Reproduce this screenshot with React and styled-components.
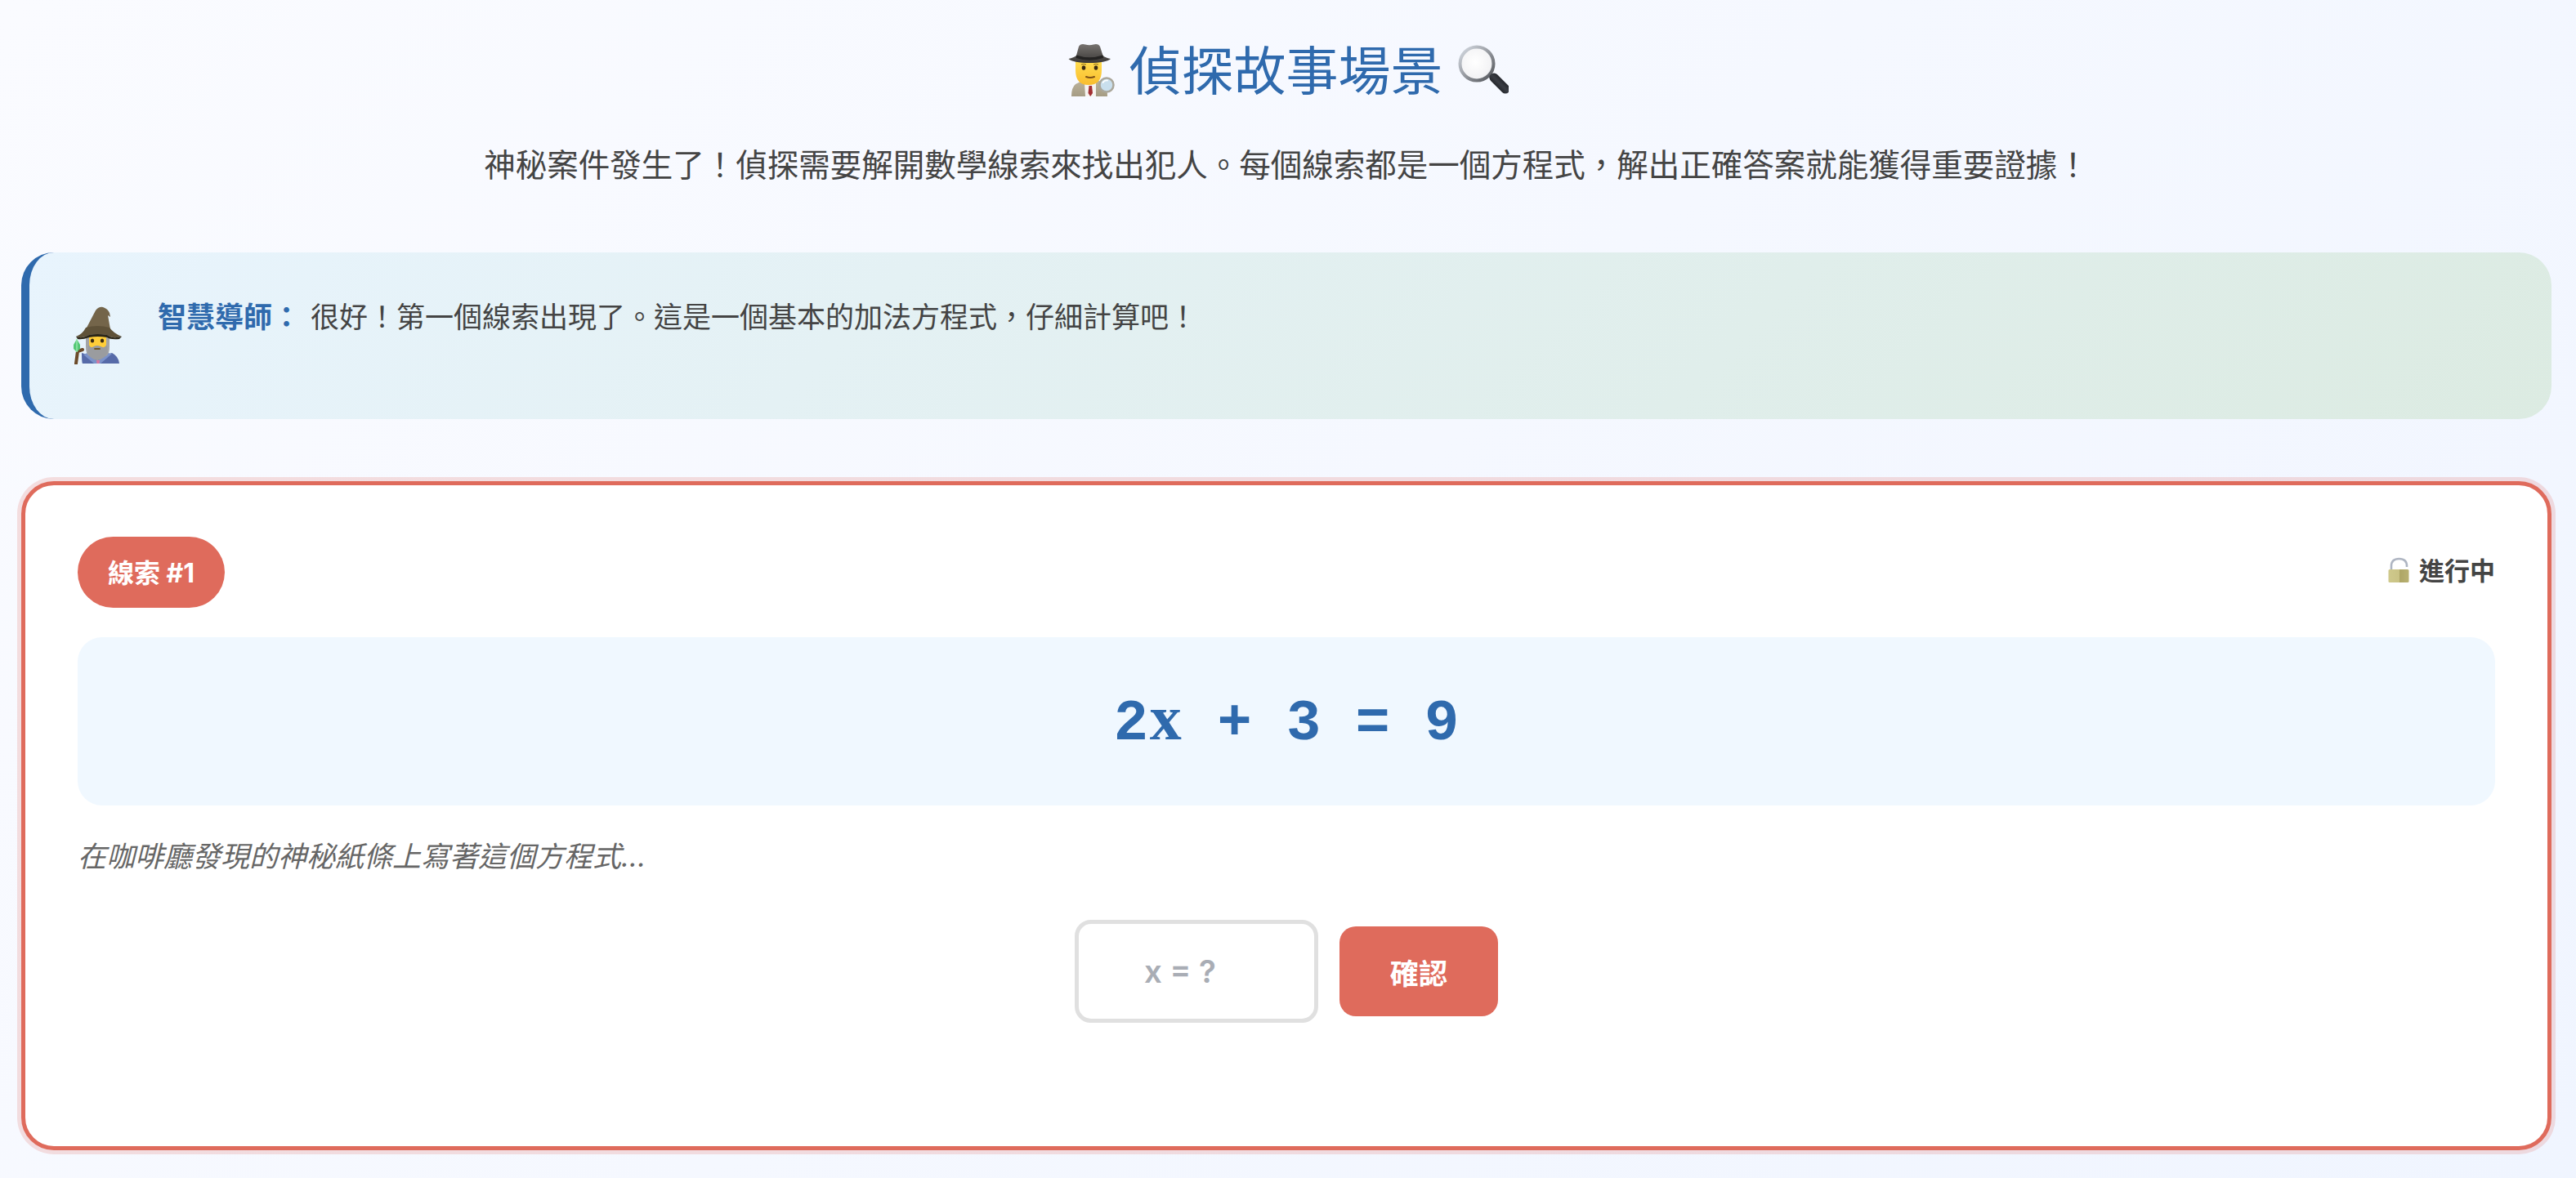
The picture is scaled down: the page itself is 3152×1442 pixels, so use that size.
import React from 'react'
import styled, { createGlobalStyle } from 'styled-components'

const FONT = '"Inter", "Noto Sans CJK TC", sans-serif'
const BLUE = '#2f6aad'
const CORAL = '#df6b5c'

const GlobalStyle = createGlobalStyle`
  html, body {
    margin: 0;
    padding: 0;
  }
  body {
    min-height: 1442px;
    font-family: ${FONT};
    background: linear-gradient(135deg, #fafbff 0%, #f0f5ff 100%);
  }
`

const Page = styled.div`
  height: 1442px;
  overflow: hidden;
  padding: 0 30px 0 26px;
  box-sizing: border-box;
`

const Header = styled.header`
  text-align: center;
  padding-top: 40px;
`

const Title = styled.h1`
  display: flex;
  justify-content: center;
  align-items: center;
  gap: 18px;
  margin: 0;
  padding-left: 3px;
  height: 92px;
  font-size: 64px;
  font-weight: 400;
  color: ${BLUE};
  line-height: 92px;
`

const TitleText = styled.span`
  padding-top: 2px;
`

const Intro = styled.p`
  margin: 41px 0 0;
  font-size: 38.5px;
  line-height: 58px;
  color: #444;
`

const Hint = styled.section`
  display: flex;
  align-items: flex-start;
  gap: 40px;
  box-sizing: border-box;
  height: 204px;
  margin-top: 78px;
  padding: 54px 60px 0 49px;
  border-left: 10px solid ${BLUE};
  border-radius: 40px;
  background: linear-gradient(135deg, #e8f4fd 0%, #dcebe2 100%);
`

const HintAvatar = styled.div`
  flex: none;
  width: 68px;
  height: 74px;
  margin-top: 9px;
`

const HintText = styled.p`
  margin: 0;
  font-size: 35px;
  line-height: 50px;
  color: #444;
  strong {
    color: ${BLUE};
    font-weight: 700;
    margin-right: 12px;
  }
`

const Card = styled.section`
  box-sizing: border-box;
  height: 819px;
  margin-top: 76px;
  padding: 63px 64px;
  background: #fff;
  border: 5px solid ${CORAL};
  border-radius: 40px;
  box-shadow: 0 0 0 5px rgba(224, 107, 93, 0.2);
`

const CardHead = styled.div`
  display: flex;
  justify-content: space-between;
  align-items: center;
`

const Badge = styled.span`
  display: inline-flex;
  align-items: center;
  justify-content: center;
  box-sizing: border-box;
  width: 180px;
  height: 87px;
  padding-bottom: 4px;
  border-radius: 44px;
  background: ${CORAL};
  color: #fff;
  font-size: 32px;
  font-weight: 700;
`

const Status = styled.span`
  display: inline-flex;
  align-items: center;
  gap: 12px;
  line-height: 46px;
  margin-top: -4px;
  font-size: 31px;
  font-weight: 600;
  color: #444;
`

const Equation = styled.div`
  display: flex;
  align-items: center;
  justify-content: center;
  height: 206px;
  margin-top: 36px;
  border-radius: 30px;
  background: #f0f8ff;
  color: ${BLUE};
  font-family: "Liberation Mono", monospace;
  font-size: 70.4px;
  font-weight: 700;
  white-space: pre;
`

const Variable = styled.span`
  display: inline-block;
  width: 42.24px;
  text-align: center;
  font-family: "Liberation Serif", serif;
  font-size: 78px;
  line-height: 1;
`

const Story = styled.p`
  margin: 37px 0 0;
  font-size: 35px;
  line-height: 50px;
  font-style: italic;
  color: #666;
`

const AnswerRow = styled.div`
  display: flex;
  justify-content: center;
  align-items: center;
  gap: 26px;
  margin-top: 53px;
`

const AnswerInput = styled.input`
  box-sizing: border-box;
  width: 298px;
  height: 126px;
  padding: 0 40px 0 0;
  border: 5px solid #e0e0e0;
  border-radius: 20px;
  background: #fff;
  outline: none;
  text-align: center;
  font-family: ${FONT};
  font-size: 38.4px;
  font-weight: 600;
  &::placeholder {
    color: #a9adb5;
    opacity: 1;
  }
`

const ConfirmButton = styled.button`
  width: 194px;
  height: 110px;
  border: 0;
  border-radius: 20px;
  background: ${CORAL};
  color: #fff;
  font-family: ${FONT};
  font-size: 35.2px;
  font-weight: 700;
`

const Detective = () => (
  <svg width="58" height="66" viewBox="0 0 58 66">
    <defs>
      <linearGradient id="coat" x1="0" y1="0" x2="0" y2="1">
        <stop offset="0" stopColor="#bdb49c" />
        <stop offset="1" stopColor="#a59c84" />
      </linearGradient>
      <linearGradient id="hat" x1="0" y1="0" x2="0" y2="1">
        <stop offset="0" stopColor="#77736f" />
        <stop offset="1" stopColor="#3a3836" />
      </linearGradient>
      <linearGradient id="face" x1="0" y1="0" x2="0" y2="1">
        <stop offset="0" stopColor="#ffdc4e" />
        <stop offset="1" stopColor="#f9bd2e" />
      </linearGradient>
    </defs>
    <path d="M5 65 Q5 54 10 50 L20 45 L37 45 L46 50 Q49 56 49 65 Z" fill="url(#coat)" />
    <path d="M21 49 H35 L35 65 H22 Z" fill="#f6f4f0" />
    <path d="M26.5 52 H30 L31 61 L28.2 65 L25.5 61 Z" fill="#a22f33" />
    <path d="M10 22 H42 V33 Q42 51 26 51 Q10 51 10 33 Z" fill="url(#face)" />
    <ellipse cx="20" cy="30" rx="2.3" ry="2.7" fill="#3a2a12" />
    <ellipse cx="35" cy="30" rx="2.3" ry="2.7" fill="#3a2a12" />
    <path d="M17 26 Q20 24.5 23 26 M32 26 Q35 24.5 38 26" stroke="#8a6a1a" strokeWidth="1" fill="none" />
    <path d="M23 41 Q28 43 33 41" stroke="#7c4f15" strokeWidth="2" strokeLinecap="round" fill="none" />
    <path d="M1.5 19 Q8 17.5 11 15 L14 4 Q16 0 22 1.5 Q27 3 32 1.5 Q38 0 40 4 L43.5 15 Q46 17.5 53 19 Q47 24 27 24 Q7 24 1.5 19 Z" fill="url(#hat)" />
    <path d="M11 14.5 Q27 20 43.5 14.5 L44 18 Q27 23.5 10.5 18 Z" fill="#242322" />
    <circle cx="48" cy="51" r="8.5" fill="#c9dfed" stroke="#aaa79b" strokeWidth="2.5" />
    <path d="M43.5 48 Q45.5 45 49 45.5" stroke="#fff" strokeWidth="1.8" fill="none" strokeLinecap="round" />
  </svg>
)

const Magnifier = () => (
  <svg width="62" height="62" viewBox="0 0 62 62">
    <defs>
      <linearGradient id="ring" x1="0" y1="0" x2="1" y2="1">
        <stop offset="0" stopColor="#d8dee6" />
        <stop offset="0.55" stopColor="#8f9298" />
        <stop offset="1" stopColor="#4f5257" />
      </linearGradient>
      <radialGradient id="lens" cx="0.45" cy="0.45" r="0.6">
        <stop offset="0" stopColor="#ffffff" />
        <stop offset="0.8" stopColor="#f3f3f5" />
        <stop offset="1" stopColor="#cfd2d7" />
      </radialGradient>
      <linearGradient id="grip" x1="0" y1="1" x2="1" y2="0">
        <stop offset="0" stopColor="#15161a" />
        <stop offset="0.5" stopColor="#3a3d44" />
        <stop offset="1" stopColor="#17181c" />
      </linearGradient>
    </defs>
    <path d="M38 36 L44 42" stroke="#8e9197" strokeWidth="6" />
    <circle cx="23" cy="23" r="20.5" fill="url(#lens)" stroke="url(#ring)" strokeWidth="4" />
    <path d="M44 40 L58 54" stroke="url(#grip)" strokeWidth="11" strokeLinecap="round" />
  </svg>
)

const Mage = () => (
  <svg width="68" height="74" viewBox="0 0 68 74">
    <path d="M15 60 Q15 72 16 73 L61 73 Q60 64 52 60 L34 66 Z" fill="#566aa8" />
    <path d="M22 60 L34 70 L47 60 L52 61 L38 73 H30 L17 62 Z" fill="#7b92c9" />
    <path d="M20 36 H49 V52 Q49 60 46 63 L34 69 L23 63 Q20 60 20 52 Z" fill="#a3a4a6" />
    <path d="M24 38 H45 V50 Q44 56 34 57 Q25 56 24 50 Z" fill="#ffce38" />
    <path d="M23 50 Q26 55 30 52 Q34 50 38 52 Q43 55 46 50 L47 60 Q42 68 34 69 Q26 68 22 60 Z" fill="#9a9c9f" />
    <ellipse cx="28" cy="45" rx="2.2" ry="2.6" fill="#3a2a12" />
    <ellipse cx="40" cy="45" rx="2.2" ry="2.6" fill="#3a2a12" />
    <path d="M31 55 H37" stroke="#6f5520" strokeWidth="1.8" strokeLinecap="round" />
    <path d="M33 69 L37 69 L36.5 73 H33.5 Z" fill="#d877a0" />
    <path d="M20 31 L32 8 Q36 3 41 4 Q47 6 49 11 L50 16 L47 14 L50 31 Z" fill="#74654a" />
    <path d="M8 40 Q16 37 20 29 Q34 25 49 29 Q54 36 64 40 Q52 43 46 38 Q34 36 24 38 Q16 43 8 40 Z" fill="#5f5239" />
    <path d="M8 40 Q16 43 24 38 Q34 36 46 38 Q52 43 64 40 L61 43 Q50 44 46 41 Q34 39 24 41 Q16 44 10 43 Z" fill="#2b2618" />
    <path d="M8 73 L10 58 Q13 57 16 56" stroke="#6b4a2a" strokeWidth="4" strokeLinecap="round" fill="none" />
    <path d="M5 50 L9 43 L13 50 L13 55 L9 59 L5 55 Z" fill="#55c876" />
    <path d="M9 43 L9 59" stroke="#a6ecb8" strokeWidth="1.2" />
  </svg>
)

const Padlock = () => (
  <svg width="26" height="33" viewBox="0 0 26 33">
    <defs>
      <linearGradient id="body" x1="0" y1="0" x2="1" y2="0">
        <stop offset="0" stopColor="#cfc98c" />
        <stop offset="0.55" stopColor="#c9c284" />
        <stop offset="0.56" stopColor="#aea666" />
        <stop offset="1" stopColor="#b9b172" />
      </linearGradient>
    </defs>
    <path d="M4 16 V11 Q4 2 13.5 2 Q23 2 23 11 V12" fill="none" stroke="#aeb5c2" strokeWidth="2.6" />
    <rect x="0.5" y="15" width="25" height="16" rx="1.5" fill="url(#body)" />
  </svg>
)

const App = () => (
  <>
    <GlobalStyle />
    <Page>
      <Header>
        <Title>
          <Detective />
          <TitleText>偵探故事場景</TitleText>
          <Magnifier />
        </Title>
        <Intro>神秘案件發生了！偵探需要解開數學線索來找出犯人。每個線索都是一個方程式，解出正確答案就能獲得重要證據！</Intro>
      </Header>

      <Hint>
        <HintAvatar>
          <Mage />
        </HintAvatar>
        <HintText>
          <strong>智慧導師：</strong>很好！第一個線索出現了。這是一個基本的加法方程式，仔細計算吧！
        </HintText>
      </Hint>

      <Card>
        <CardHead>
          <Badge>線索 #1</Badge>
          <Status>
            <Padlock />
            進行中
          </Status>
        </CardHead>
        <Equation>
          <span>
            2<Variable>x</Variable> + 3 = 9
          </span>
        </Equation>
        <Story>在咖啡廳發現的神秘紙條上寫著這個方程式...</Story>
        <AnswerRow>
          <AnswerInput placeholder="x = ?" />
          <ConfirmButton>確認</ConfirmButton>
        </AnswerRow>
      </Card>
    </Page>
  </>
)

export default App
